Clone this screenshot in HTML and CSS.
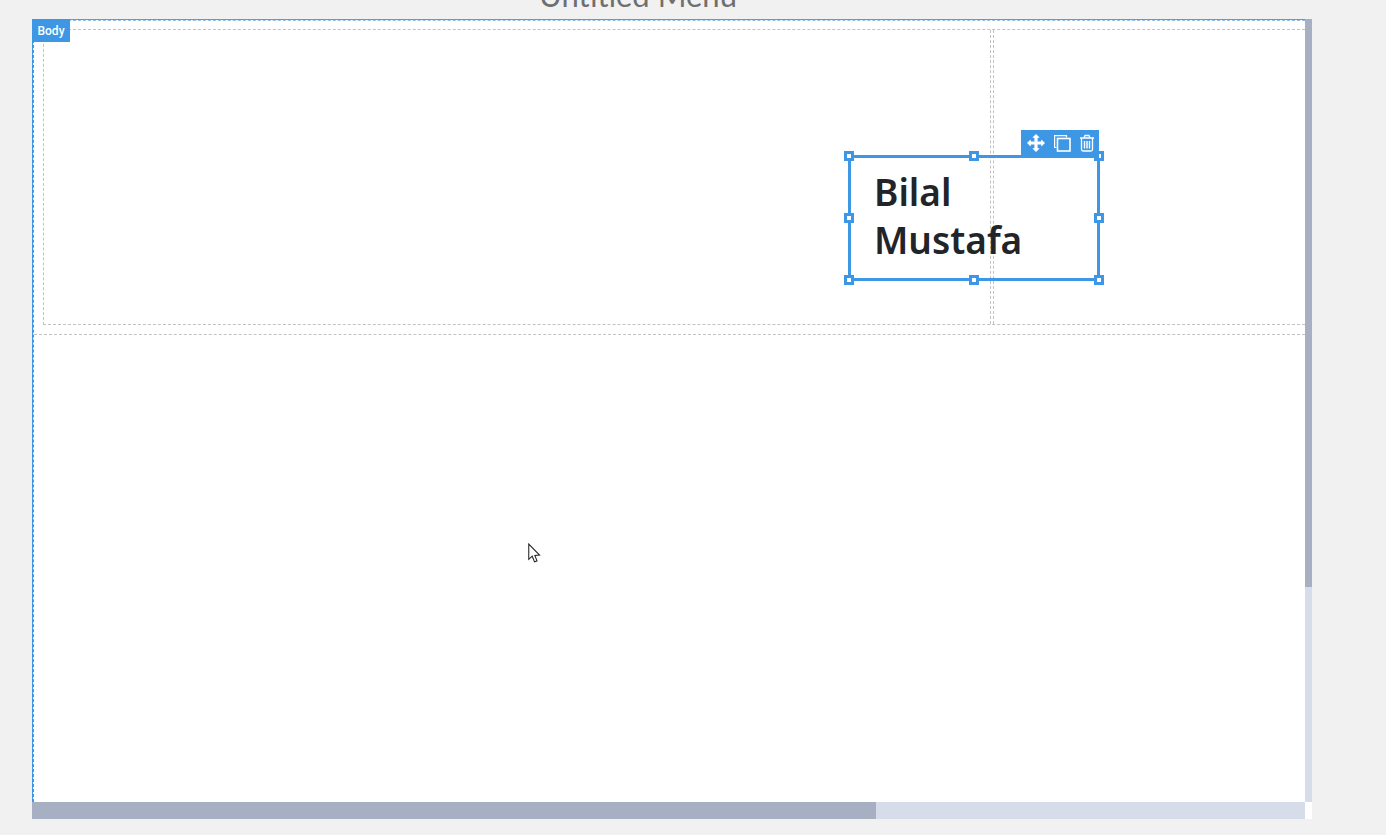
FILE: index.html
```html
<!DOCTYPE html>
<html lang="en">
<head>
  <meta charset="UTF-8">
  <title>Untitled Menu</title>
  <link rel="stylesheet" href="styles.css">
</head>
<body>

<div class="menu-title">Untitled Menu</div>

<div class="canvas">
  <div class="viewport">
    <div class="body-area">
      <div class="row">
        <div class="col col-main"></div>
        <div class="col col-side"></div>
      </div>
      <div class="section"></div>
    </div>
  </div>

  <div class="vbar"><div class="vbar-thumb"></div></div>
  <div class="hbar"><div class="hbar-thumb"></div></div>
  <div class="corner"></div>

  <span class="body-tag">Body</span>

  <!-- selected element -->
  <div class="selected">
    <span class="handle h-tl"></span>
    <span class="handle h-tm"></span>
    <span class="handle h-tr"></span>
    <span class="handle h-ml"></span>
    <span class="handle h-mr"></span>
    <span class="handle h-bl"></span>
    <span class="handle h-bm"></span>
    <span class="handle h-br"></span>

    <div class="toolbar">
      <svg class="tool" width="18" height="18" viewBox="0 0 18 18">
        <path fill="#fff" d="M9 0 L12.6 3.6 L10.6 4 L10.6 7.4 L14 7.4 L14.4 5.4 L18 9 L14.4 12.6 L14 10.6 L10.6 10.6 L10.6 14 L12.6 14.4 L9 18 L5.4 14.4 L7.4 14 L7.4 10.6 L4 10.6 L3.6 12.6 L0 9 L3.6 5.4 L4 7.4 L7.4 7.4 L7.4 4 L5.4 3.6 Z"/>
      </svg>
      <svg class="tool" width="18" height="18" viewBox="0 0 18 18" fill="none" stroke="#fff">
        <path stroke-width="1.2" d="M3.5 13.5 H1.6 V1.6 H13.5 V3.5"/>
        <rect x="4.5" y="4.5" width="12.5" height="12.5" stroke-width="1.6"/>
      </svg>
      <svg class="tool" width="16" height="18" viewBox="0 0 16 18" fill="none" stroke="#fff">
        <path stroke-width="1.3" d="M1 4 H15 M5 4 L6 1.5 H10 L11 4 M2.5 4 V15.5 Q2.5 17 4 17 H12 Q13.5 17 13.5 15.5 V4"/>
        <path stroke-width="1.4" d="M5.5 7 V14.5 M8 7 V14.5 M10.5 7 V14.5"/>
      </svg>
    </div>

    <h1 class="headline">Bilal Mustafa</h1>
  </div>

  <svg class="cursor" width="14" height="21" viewBox="0 0 13 20">
    <path fill="#fff" stroke="#222" stroke-width="1" d="M1.5 1 V15.5 L4.8 12.6 L7 18 L9.4 17 L7.3 11.8 L11.8 11.5 Z"/>
  </svg>
</div>

</body>
</html>
```

FILE: styles.css
```css
* { box-sizing: border-box; }
html, body { margin: 0; height: 100%; overflow: hidden; }
body { background-color: #f1f1f1; font-family: Roboto, Arial, sans-serif; }

.menu-title {
  height: 24px;
  margin-top: -5px;
  overflow: hidden;
  width: 1276px;
  text-align: center;
  font-family: Lato, sans-serif;
  font-size: 31px;
  line-height: 0;
  color: #6f6f6f;
}

.canvas {
  position: relative;
  width: 1280px;
  height: 800px;
  margin-left: 32px;
  display: grid;
  grid-template-columns: 1273px 7px;
  grid-template-rows: 783px 17px;
  background-color: #fff;
}

/* editable area */
.viewport {
  border-top: 1px solid #5d9bd6;
  border-left: 1px solid #3d97e4;
  overflow: hidden;
}
.body-area {
  height: 100%;
  padding-top: 8px;
  border-top: 1px dashed #8fc0ec;
  border-left: 1px dashed #3d97e4;
}
.row {
  display: flex;
  gap: 2px;
  height: 296px;
  margin-left: 9px;
  border-top: 1px dashed #c2c2c2;
  border-bottom: 1px dashed #c2c2c2;
  border-left: 1px dashed #c2c2c2;
}
.col-main { width: 947px; border-right: 1px dashed #c2c2c2; }
.col-side { flex: 1; border-left: 1px dashed #c2c2c2; }
.section {
  margin-top: 9px;
  border-top: 1px dashed #c2c2c2;
}

/* scrollbars */
.vbar { background-color: #d6dce9; }
.vbar-thumb { height: 568px; background-color: #a7afc2; }
.hbar { background-color: #d6dce9; }
.hbar-thumb { width: 844px; height: 100%; background-color: #a7afc2; }
.corner { background-color: #fff; }

.body-tag {
  position: absolute;
  left: 0;
  top: 0;
  width: 38px;
  height: 23px;
  background-color: #3d97e4;
  color: #fff;
  font-size: 12px;
  font-weight: 500;
  line-height: 25px;
  text-align: center;
}

/* selected element box */
.selected {
  position: absolute;
  left: 816px;
  top: 136px;
  width: 252px;
  height: 126px;
  padding: 10px 23px;
  border: 3px solid #3d97e4;
  background-color: transparent;
}
.headline {
  margin: 0;
  font-family: "Noto Sans", sans-serif;
  font-size: 37px;
  font-weight: 600;
  line-height: 48px;
  color: #212529;
}

.handle {
  position: absolute;
  width: 10px;
  height: 10px;
  background-color: #fff;
  border: 3px solid #3d97e4;
}
.h-tl { left: -7px; top: -7px; }
.h-tm { left: 118px; top: -7px; }
.h-tr { right: -7px; top: -7px; }
.h-ml { left: -7px; top: 55px; }
.h-mr { right: -7px; top: 55px; }
.h-bl { left: -7px; bottom: -7px; }
.h-bm { left: 118px; bottom: -7px; }
.h-br { right: -7px; bottom: -7px; }

.toolbar {
  position: absolute;
  right: -2px;
  top: -28px;
  width: 78px;
  height: 28px;
  padding: 0 4px 2px 6px;
  display: flex;
  align-items: center;
  justify-content: space-between;
  background-color: #3d97e4;
}
.tool { display: block; }

.cursor {
  position: absolute;
  left: 495px;
  top: 524px;
}
```
